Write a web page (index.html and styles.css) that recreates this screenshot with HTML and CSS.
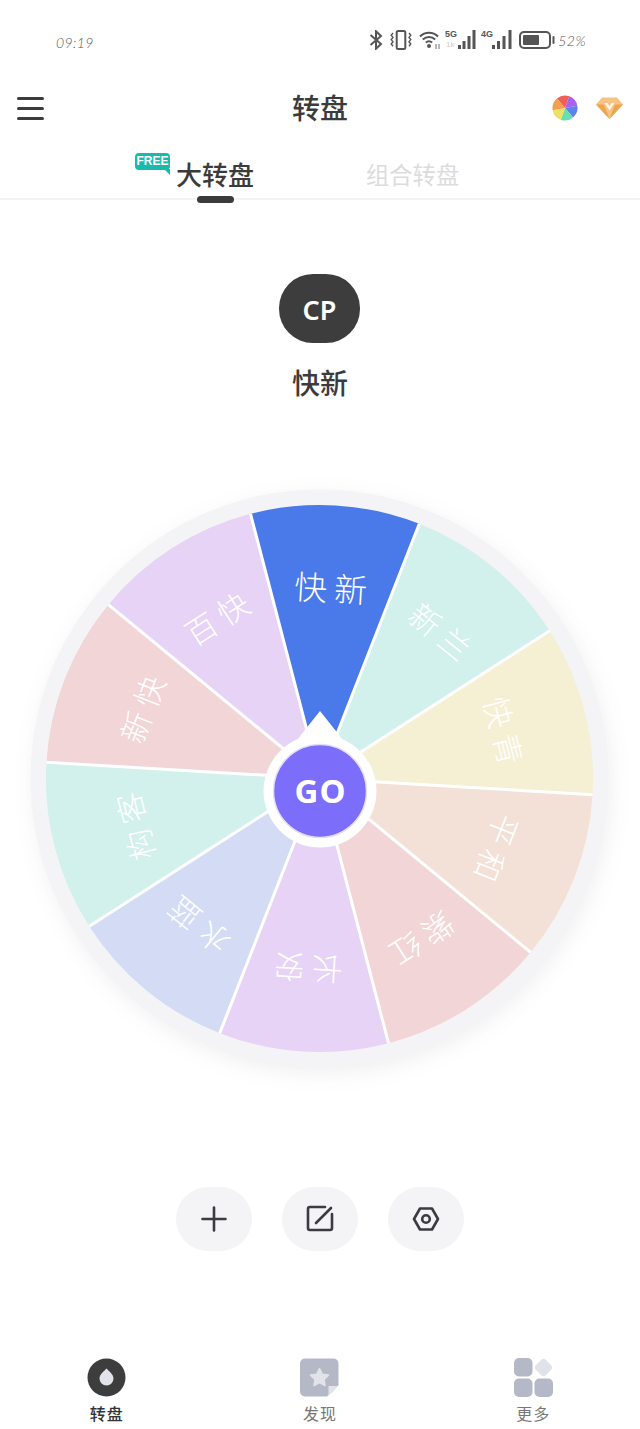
FILE: index.html
```html
<!DOCTYPE html>
<html lang="zh">
<head>
<meta charset="utf-8">
<title>转盘</title>
<link rel="stylesheet" href="styles.css">
</head>
<body>
<div class="app">
  <div class="statusbar">
    <span class="time">09:19</span>
    <div class="status-icons">
      <svg class="si-bt" width="14" height="20" viewBox="0 0 14 20"><path class="line" d="M1.5 5 12 14 7 18.7V1.3L12 6 1.5 15"/></svg>
      <svg class="si-vib" width="22" height="20" viewBox="0 0 22 20"><rect class="line" x="6.7" y="1" width="8.6" height="18" rx="1.5"/><path class="line thin" d="M3 3 1.2 5.2 3 7.4 1.2 9.6 3 11.8 1.2 14 3 16.2M19 3l1.8 2.2L19 7.4l1.8 2.2L19 11.8l1.8 2.2L19 16.2"/></svg>
      <svg class="si-wifi" width="22" height="20" viewBox="0 0 22 20"><path class="line" d="M1 6.5C6 1.5 14 1.5 19 6.5M3.8 9.6C7.4 6.2 12.6 6.2 16.2 9.6M6.8 12.6C8.8 10.9 11.2 10.9 13.200 12.6"/><circle class="dot" cx="10" cy="16" r="2"/><path class="line thin light" d="M17 19v-5M20 14v5"/></svg>
      <svg class="si-sig" width="31" height="22" viewBox="0 0 31 22"><text class="net" x="0" y="8">5G</text><text class="net-sub" x="1" y="18">1k</text><rect class="dot" x="13" y="16" width="3" height="4"/><rect class="dot" x="17.500" y="12" width="3" height="8"/><rect class="dot" x="22.500" y="7" width="3" height="13"/><rect class="dot" x="27.500" y="1" width="3" height="19"/></svg>
      <svg class="si-sig" width="31" height="22" viewBox="0 0 31 22"><text class="net" x="0" y="8">4G</text><rect class="dot" x="11" y="16" width="3" height="4"/><rect class="dot" x="16" y="12" width="3" height="8"/><rect class="dot" x="21.500" y="7" width="3" height="13"/><rect class="dot" x="27.500" y="1" width="3" height="19"/></svg>
      <svg class="si-bat" width="36" height="20" viewBox="0 0 36 20"><rect class="line" x="1" y="2" width="30" height="16" rx="4"/><rect class="dot" x="4" y="5" width="16" height="10" rx="1"/><rect class="dot" x="33.500" y="6" width="2" height="8" rx="1"/></svg>
      <span class="pct">52%</span>
    </div>
  </div>

  <header class="topbar">
    <div class="burger"><i></i><i></i><i></i></div>
    <h1 class="page-title">转盘</h1>
    <div class="top-actions">
      <svg width="26" height="26" viewBox="-13 -13 26 26">
        <path class="cw1" d="M0 0-8.03-9.58A12.5 12.5 0 0 1 4.27-11.75Z"/>
        <path class="cw2" d="M0 0-8.03-9.58A12.5 12.5 0 0 1 4.27-11.75Z" transform="rotate(60)"/>
        <path class="cw3" d="M0 0-8.03-9.58A12.5 12.5 0 0 1 4.27-11.75Z" transform="rotate(120)"/>
        <path class="cw4" d="M0 0-8.03-9.58A12.5 12.5 0 0 1 4.27-11.75Z" transform="rotate(180)"/>
        <path class="cw5" d="M0 0-8.03-9.58A12.5 12.5 0 0 1 4.27-11.75Z" transform="rotate(240)"/>
        <path class="cw6" d="M0 0-8.03-9.58A12.5 12.5 0 0 1 4.27-11.75Z" transform="rotate(300)"/>
      </svg>
      <svg width="29" height="24" viewBox="0 0 29 24">
        <path class="gem" d="M7 1.500H22L28 8.500 14.500 23 1 8.500Z"/>
        <path class="gem-lo" d="M1 8.500H9L14.500 23ZM28 8.500H20L14.500 23Z"/>
        <path class="gem-v" d="M9.500 7 14.500 14.500 19.500 7H16.500L14.500 10 12.500 7Z"/>
      </svg>
    </div>
  </header>

  <nav class="tabs">
    <div class="tab tab-on">
      <span class="badge">FREE</span>
      大转盘
      <i class="tab-mark"></i>
    </div>
    <div class="tab tab-off">组合转盘</div>
  </nav>

  <section class="hero">
    <div class="cp">CP</div>
    <div class="hero-title">快新</div>
  </section>

  <svg class="wheel" width="640" height="620" viewBox="-319.500 -308.500 640 620">
    <circle class="rim" cx="0" cy="0" r="289"/>
    <path class="s1" d="M0 0-69-264.700A273.500 273.500 0 0 1 99.800-254.700Z"/>
    <path class="s2" d="M0 0-69-264.700A273.500 273.500 0 0 1 99.800-254.700Z" transform="rotate(36)"/>
    <path class="s3" d="M0 0-69-264.700A273.500 273.500 0 0 1 99.800-254.700Z" transform="rotate(72)"/>
    <path class="s4" d="M0 0-69-264.700A273.500 273.500 0 0 1 99.800-254.700Z" transform="rotate(108)"/>
    <path class="s5" d="M0 0-69-264.700A273.500 273.500 0 0 1 99.800-254.700Z" transform="rotate(144)"/>
    <path class="s6" d="M0 0-69-264.700A273.500 273.500 0 0 1 99.800-254.700Z" transform="rotate(180)"/>
    <path class="s7" d="M0 0-69-264.700A273.500 273.500 0 0 1 99.800-254.700Z" transform="rotate(216)"/>
    <path class="s2" d="M0 0-69-264.700A273.500 273.500 0 0 1 99.800-254.700Z" transform="rotate(252)"/>
    <path class="s5" d="M0 0-69-264.700A273.500 273.500 0 0 1 99.800-254.700Z" transform="rotate(288)"/>
    <path class="s6" d="M0 0-69-264.700A273.500 273.500 0 0 1 99.800-254.700Z" transform="rotate(324)"/>
    <path class="seps" d="M0 0-69-264.700M0 0 99.800-254.700M0 0 230.200-147.700M0 0 273 16.200M0 0 211.100 173.900M0 0 69 264.700M0 0-99.800 254.700M0 0-230.200 147.700M0 0-273-16.200M0 0-211.100-173.900"/>
    <text class="label label-main" x="3.500" y="-178" transform="rotate(3.4)">快新</text>
    <text class="label" x="3.500" y="-178" transform="rotate(39.4)">新兰</text>
    <text class="label" x="3.500" y="-178" transform="rotate(75.4)">快青</text>
    <text class="label" x="3.500" y="-178" transform="rotate(111.4)">平和</text>
    <text class="label" x="3.500" y="-178" transform="rotate(147.4)">紫红</text>
    <text class="label" x="3.500" y="-178" transform="rotate(183.4)">长安</text>
    <text class="label" x="3.500" y="-178" transform="rotate(219.4)">水蓝</text>
    <text class="label" x="3.500" y="-178" transform="rotate(255.4)">构客</text>
    <text class="label" x="3.500" y="-178" transform="rotate(291.4)">新快</text>
    <text class="label" x="3.500" y="-178" transform="rotate(327.4)">百快</text>
    <path class="hub" d="M.5-67.500 24-38H-23Z"/>
    <circle class="hub" cx=".5" cy="12.500" r="56.500"/>
    <circle class="hub-face" cx=".5" cy="12.500" r="46.500"/>
    <text class="go" x="1" y="24.500">GO</text>
  </svg>

  <div class="actions">
    <button class="act"><svg width="28" height="28" viewBox="0 0 28 28"><path class="ico" d="M14 2.500v23M2.500 14h23"/></svg></button>
    <button class="act"><svg width="28" height="28" viewBox="0 0 28 28"><path class="ico" d="M26 9V23A2 2 0 0 1 24 25H4A2 2 0 0 1 2 23V4A2 2 0 0 1 4 2H19M10 18 25 3"/></svg></button>
    <button class="act"><svg width="28" height="28" viewBox="0 0 28 28"><path class="ico" d="M8 3.500H20L26 14 20 24.500H8L2 14Z"/><circle class="ico" cx="14" cy="14" r="3.800"/></svg></button>
  </div>

  <nav class="bottom">
    <div class="nav-item nav-on">
      <svg width="39" height="39" viewBox="0 0 39 39"><circle class="n-dark" cx="19.500" cy="19.500" r="19"/><path class="n-pale" d="M19.500 10.500C22 13.500 26.500 16 26.500 20.500A7 7 0 0 1 12.500 20.500C12.500 16 17 13.500 19.500 10.500Z"/></svg>
      <span>转盘</span>
    </div>
    <div class="nav-item">
      <svg width="39" height="39" viewBox="0 0 39 39"><path class="n-mid" d="M5 .5H33.500A5 5 0 0 1 38.500 5.500V27L27 38.500H5A5 5 0 0 1 0 33.500V5.500A5 5 0 0 1 5 .5Z"/><path class="n-pale" d="M28.500 37.500V28H38L33 34Z"/><path class="n-pale n-round" d="M19.500 10.500 22.300 16.200 28.500 17.100 24 21.400 25 27.500 19.500 24.600 14 27.500 15 21.400 10.500 17.100 16.700 16.200Z"/></svg>
      <span>发现</span>
    </div>
    <div class="nav-item">
      <svg width="39" height="39" viewBox="0 0 39 39"><rect class="n-mid" x="0" y="0" width="18.500" height="18.500" rx="5"/><rect class="n-mid" x="0" y="20.500" width="18.500" height="18.500" rx="5"/><rect class="n-mid" x="20.500" y="20.500" width="18.500" height="18.500" rx="5"/><rect class="n-pale" x="22.500" y="2.500" width="14" height="14" rx="3.500" transform="rotate(45 29.500 9.500)"/></svg>
      <span>更多</span>
    </div>
  </nav>
</div>
</body>
</html>
```

FILE: styles.css
```css
* { box-sizing: border-box; }
html, body { margin: 0; padding: 0; background: #fff; }
body { font-family: "Noto Sans CJK SC", "Noto Sans", sans-serif; color: #3b3b3b; }
.app { width: 640px; height: 1429px; display: flex; flex-direction: column; overflow: hidden; }

.statusbar { height: 84px; display: flex; align-items: center; justify-content: space-between; padding: 0 54px 4px 56px; }
.time { font-family: "Lato", sans-serif; font-style: italic; font-weight: 300; font-size: 14px; letter-spacing: 0.4px; color: #555; position: relative; top: 2px; }
.status-icons { display: flex; align-items: center; }
.status-icons svg { display: block; flex: none; }
.si-bt { margin-right: 7px; }
.si-vib { margin-right: 7px; }
.si-wifi { margin-right: 4px; }
.si-sig { margin-right: 5px; }
.si-bat { margin-left: 2px; margin-right: 3px; }
.pct { font-family: "Lato", sans-serif; font-style: italic; font-weight: 300; font-size: 14px; letter-spacing: 0.5px; color: #555; }
.line { fill: none; stroke: #555; stroke-width: 2; }
.thin { stroke-width: 1.4; }
.light { stroke: #999; }
.dot { fill: #555; }
.net { font-family: "Liberation Sans", sans-serif; font-size: 9px; font-weight: 700; fill: #555; }
.net-sub { font-family: "Liberation Sans", sans-serif; font-size: 8px; fill: #ccc; }

.topbar { height: 48px; display: flex; align-items: center; justify-content: space-between; padding: 0 16px 0 17px; position: relative; }
.burger { width: 27px; display: flex; flex-direction: column; gap: 7px; }
.burger i { display: block; height: 3px; border-radius: 2px; background: #3b3b3b; }
.page-title { position: absolute; left: 0; right: 0; top: 0; margin: 0; font-size: 28px; font-weight: 500; line-height: 46px; text-align: center; }
.top-actions { display: flex; align-items: center; gap: 17px; }
.top-actions svg { display: block; }
.cw1 { fill: #ef5f56; } .cw2 { fill: #a862ee; } .cw3 { fill: #5f83ee; }
.cw4 { fill: #67e0b0; } .cw5 { fill: #efe066; } .cw6 { fill: #f2a04e; }
.gem { fill: #f6c384; }
.gem-lo { fill: #eca650; }
.gem-v { fill: #fff6e6; }

.tabs { height: 68px; display: flex; align-items: center; gap: 112px; padding: 18px 0 0 176px; border-bottom: 2px solid #f3f3f4; }
.tab { position: relative; line-height: 40px; white-space: nowrap; }
.tab-on { font-size: 26px; font-weight: 500; }
.tab-off { font-size: 23.300px; color: #dcdcdc; }
.tab-mark { position: absolute; left: 21px; bottom: -9px; width: 37px; height: 7px; border-radius: 4px; background: #3b3b3b; }
.badge { position: absolute; left: -41px; top: -1px; width: 35px; height: 17px; border-radius: 4px; background: #1db8ac; color: #fff; font-family: "Liberation Sans", sans-serif; font-size: 12px; font-weight: 700; line-height: 17px; text-align: center; }
.badge::after { content: ""; position: absolute; right: 0; top: 16px; border-left: 6px solid transparent; border-top: 6px solid #1db8ac; }

.hero { display: flex; flex-direction: column; align-items: center; padding-top: 74px; }
.cp { width: 81px; height: 69px; margin-right: 1px; border-radius: 34px; background: #3d3d3d; color: #fff; font-family: "Noto Sans", sans-serif; font-size: 27px; font-weight: 600; line-height: 71px; text-align: center; }
.hero-title { margin-top: 19px; font-size: 28px; font-weight: 500; line-height: 40px; }

.wheel { display: block; flex: none; margin-top: 68px; }
.rim { fill: #f4f4f7; filter: drop-shadow(3px 6px 10px rgba(60, 60, 80, 0.08)); }
.s1 { fill: #4a79ea; } .s2 { fill: #d2f0ec; } .s3 { fill: #f5efd4; } .s4 { fill: #f3e1d7; }
.s5 { fill: #f2d5d6; } .s6 { fill: #e7d3f5; } .s7 { fill: #d4dcf5; }
.seps { fill: none; stroke: #fff; stroke-width: 3; }
.label { fill: #fff; font-family: "Noto Sans CJK SC", sans-serif; font-weight: 300; font-size: 31px; letter-spacing: 7px; text-anchor: middle; }
.label-main { font-size: 33px; }
.hub { fill: #fff; }
.hub-face { fill: #7c6dfa; stroke: #e4def9; stroke-width: 1.500; }
.go { fill: #fff; font-family: "Noto Sans", sans-serif; font-weight: 700; font-size: 33px; letter-spacing: 1px; text-anchor: middle; }

.actions { display: flex; justify-content: center; gap: 30px; margin-top: 97px; }
.act { width: 76px; height: 64px; padding: 0; border: 0; border-radius: 32px; background: #f4f4f6; display: flex; align-items: center; justify-content: center; }
.act svg { display: block; }
.ico { fill: none; stroke: #3b3b40; stroke-width: 2.600; stroke-linecap: round; stroke-linejoin: round; }

.bottom { display: grid; grid-template-columns: repeat(3, 1fr); margin-top: 107px; }
.nav-item { display: flex; flex-direction: column; align-items: center; gap: 4px; font-size: 16px; letter-spacing: 1px; line-height: 24px; color: #777; }
.nav-item svg { display: block; }
.nav-on { color: #333; font-weight: 500; }
.n-dark { fill: #3d3d3d; }
.n-mid { fill: #b5b9c7; }
.n-pale { fill: #e2e3ea; }
.n-round { stroke: #e2e3ea; stroke-width: 1.500; stroke-linejoin: round; }
```
